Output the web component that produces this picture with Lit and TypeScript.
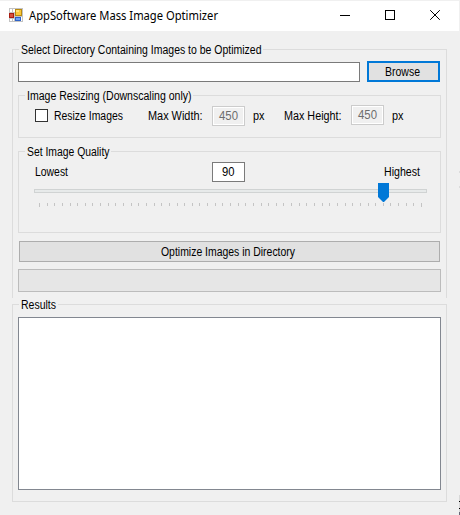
import { LitElement, html, css, svg } from "lit";
import { customElement, property } from "lit/decorators.js";

/** A single-line label whose glyphs are fitted to a fixed run width. */
@customElement("ui-text")
class UiText extends LitElement {
  @property() text = "";
  @property({ type: Number }) w = 0;
  @property() variant = "";

  static styles = css`
    :host { display: block; flex: none; height: 14px; }
    svg { display: block; overflow: visible; }
    text { font-family: "Liberation Sans", Arial, sans-serif; font-size: 12px; fill: #000; }
    .muted { fill: #6d6d6d; }
    .title { font-family: "Noto Sans", "Open Sans", sans-serif; }
  `;

  render() {
    return html`<svg width=${this.w} height="14">
      <text class=${this.variant} x="0" y="11" textLength=${this.w} lengthAdjust="spacingAndGlyphs">${this.text}</text>
    </svg>`;
  }
}

/** A group box: thin frame with its caption set into the top line. */
@customElement("ui-group")
class UiGroup extends LitElement {
  @property() caption = "";
  @property({ type: Number }) w = 0;

  static styles = css`
    :host { display: flex; flex-direction: column; box-sizing: border-box; border: 1px solid #dcdcdc; }
    .legend { height: 0; display: flex; }
    .cap {
      height: 14px; padding: 0 2px; background: #f0f0f0;
      margin: -7px 0 0 var(--legend-x, 5px);
    }
  `;

  render() {
    return html`
      <div class="legend"><div class="cap"><ui-text .text=${this.caption} .w=${this.w}></ui-text></div></div>
      <slot></slot>
    `;
  }
}

@customElement("app-root")
class AppRoot extends LitElement {
  static styles = css`
    :host { display: block; width: 460px; height: 515px; background: #f0f0f0; overflow: hidden; position: relative; }
    * { box-sizing: border-box; }
    svg { display: block; flex: none; }

    .titlebar {
      height: 31px; border-top: 1px solid #f0f0f0; border-right: 1px solid #f0f0f0;
      background: #fff; display: flex; align-items: flex-start; padding: 7px 0 0 9px;
    }
    .titlebar ui-text { margin: 1px 0 0 6px; }
    .controls { margin: 2px 19px 0 auto; display: flex; gap: 35px; }

    .main {
      --legend-x: 0.5px;
      display: flex; width: 435px; height: 249px; margin: 18px 0 0 12px;
      border-bottom: none; padding: 0 5px;
    }
    .pathrow { display: flex; margin-top: 11px; height: 21px; }
    .field { background: #fff; border: 1px solid #7a7a7a; height: 20px; display: flex; justify-content: center; padding-top: 2px; }
    .field.path { width: 342px; margin-top: 1px; }
    .field.num { width: 33px; }
    .field.off { background: #f0f0f0; border-color: #ccc; box-shadow: inset 0 0 0 1px #fff; }
    .button { background: #e1e1e1; border: 1px solid #adadad; height: 21px; display: flex; justify-content: center; padding: 3px 3px 0 0; }
    .browse { width: 73px; margin-left: 7px; border: 2px solid #0078d7; padding-top: 2px; }

    .inner { --legend-x: 5.8px; width: 423px; }
    .resize { height: 43px; margin-top: 13px; }
    .quality { height: 82px; margin-top: 13px; }
    .row { display: flex; align-items: flex-start; padding: 9px 0 0 16px; }
    .row ui-text { margin-top: 4px; }
    .row .field ui-text, .scale .field ui-text { margin-top: 0; }
    .check { width: 13px; height: 13px; border: 1px solid #333; background: #fff; margin: 4px 5.5px 0 0; flex: none; }
    .max-w { margin-left: 25px; }
    .max-h { margin-left: 19px; }
    .row .num { margin: 0 8px 0 10px; }
    .row .num.low { margin-top: 1px; }

    .scale { display: flex; padding: 10px 20px 0 16px; }
    .scale > ui-text { margin-top: 3px; }
    .scale .num { margin: 0 auto 0 144px; }
    .slider { margin: 1px 0 0 15px; }

    .optimize { width: 421px; margin: 8px 0 0 1px; }
    .progress { width: 423px; height: 23px; margin-top: 7px; background: #e6e6e6; border: 1px solid #bcbcbc; }

    .results { --legend-x: 0.5px; width: 435px; height: 198px; margin: 6px 0 0 12px; padding: 0 5px; }
    .output { width: 423px; height: 173px; margin-top: 12px; background: #fff; border: 1px solid #828790; }

    .edge { position: absolute; right: 0; top: 0; }
  `;

  private ticks() {
    return Array.from({ length: 51 }, (_, i) => {
      const x = 5 + Math.round((i * 382) / 50);
      return svg`<rect x=${x} y="20" width="1" height=${i === 0 || i === 50 ? 4 : 3} fill="#c4c4c4"/>`;
    });
  }

  render() {
    return html`
      <div class="titlebar">
        <svg width="14" height="14" shape-rendering="crispEdges">
          <rect width="14" height="14" fill="#c3c3c3"/>
          <rect x="1" y="1" width="2" height="3" fill="#fff"/><rect x="4" y="1" width="2" height="3" fill="#fff"/>
          <rect x="1" y="11" width="2" height="2" fill="#fff"/><rect x="4" y="11" width="1" height="2" fill="#fff"/>
          <rect x="12" y="9" width="1" height="4" fill="#fff"/>
          <rect x="0" y="5" width="5" height="5" fill="#a81c12"/><rect x="1" y="6" width="3" height="3" fill="#d8503c"/>
          <rect x="6" y="1" width="7" height="7" fill="#b98a10"/><rect x="7" y="2" width="5" height="5" fill="#fac838"/>
          <rect x="7" y="2" width="3" height="2" fill="#ffe07a"/>
          <rect x="6" y="9" width="6" height="4" fill="#2e62c8"/><rect x="7" y="10" width="4" height="2" fill="#6ea2f4"/>
        </svg>
        <ui-text variant="title" .text=${"AppSoftware Mass Image Optimizer"} .w=${189}></ui-text>
        <div class="controls">
          <svg width="10" height="10" shape-rendering="crispEdges"><rect y="5" width="10" height="1"/></svg>
          <svg width="10" height="10"><rect x=".5" y=".5" width="9" height="9" fill="none" stroke="#000"/></svg>
          <svg width="10" height="10"><path d="M.2 .2 9.8 9.8M9.8 .2 .2 9.8" stroke="#000" fill="none"/></svg>
        </div>
      </div>

      <ui-group class="main" .caption=${"Select Directory Containing Images to be Optimized"} .w=${240.5}>
        <div class="pathrow">
          <div class="field path"></div>
          <div class="button browse"><ui-text .text=${"Browse"} .w=${35}></ui-text></div>
        </div>

        <ui-group class="inner resize" .caption=${"Image Resizing (Downscaling only)"} .w=${164.5}>
          <div class="row">
            <div class="check"></div>
            <ui-text .text=${"Resize Images"} .w=${69}></ui-text>
            <ui-text class="max-w" .text=${"Max Width:"} .w=${54.5}></ui-text>
            <div class="field num off low"><ui-text variant="muted" .text=${"450"} .w=${19}></ui-text></div>
            <ui-text .text=${"px"} .w=${11.5}></ui-text>
            <ui-text class="max-h" .text=${"Max Height:"} .w=${57.5}></ui-text>
            <div class="field num off"><ui-text variant="muted" .text=${"450"} .w=${19}></ui-text></div>
            <ui-text .text=${"px"} .w=${11.5}></ui-text>
          </div>
        </ui-group>

        <ui-group class="inner quality" .caption=${"Set Image Quality"} .w=${82.5}>
          <div class="scale">
            <ui-text .text=${"Lowest"} .w=${33}></ui-text>
            <div class="field num"><ui-text .text=${"90"} .w=${12.5}></ui-text></div>
            <ui-text .text=${"Highest"} .w=${36}></ui-text>
          </div>
          <svg class="slider" width="393" height="26" shape-rendering="crispEdges">
            <rect x=".5" y="6.5" width="392" height="3" fill="#e7eaea" stroke="#d0d3d3"/>
            ${this.ticks()}
            <path d="M344 0h11v14l-5 5h-1l-5-5z" fill="#0078d7" shape-rendering="auto"/>
          </svg>
        </ui-group>

        <div class="button optimize"><ui-text .text=${"Optimize Images in Directory"} .w=${134}></ui-text></div>
        <div class="progress"></div>
      </ui-group>

      <ui-group class="results" .caption=${"Results"} .w=${35}>
        <div class="output"></div>
      </ui-group>

      <svg class="edge" width="1" height="515" shape-rendering="crispEdges">
        <rect y="171" width="1" height="2" fill="#dcdcdc"/><rect y="186" width="1" height="2" fill="#dcdcdc"/>
        <rect y="495" width="1" height="20" fill="#d8d8d8"/>
        <rect y="501" width="1" height="1"/><rect y="508" width="1" height="1"/>
        <rect y="512" width="1" height="3" fill="#667"/>
      </svg>
    `;
  }
}
